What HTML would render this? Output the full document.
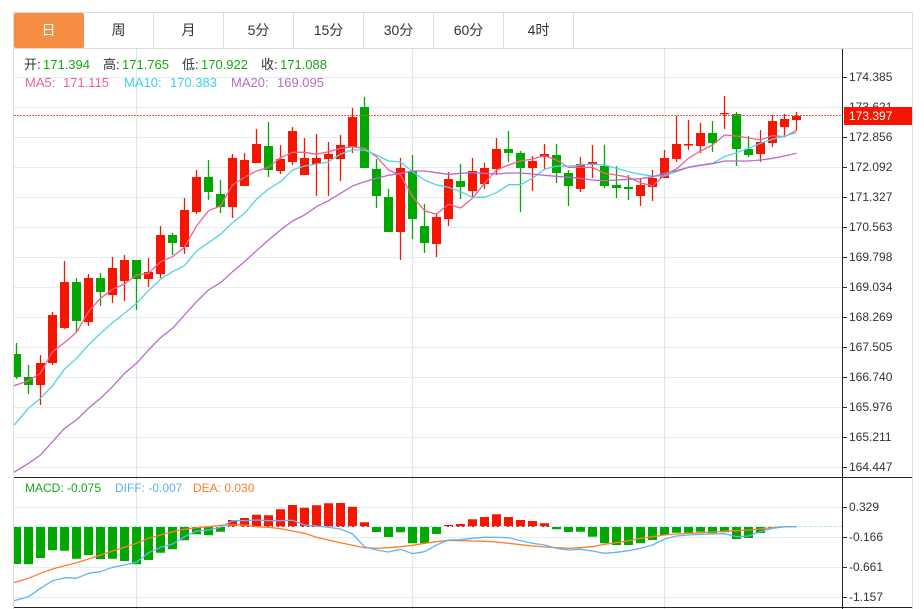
<!DOCTYPE html>
<html><head><meta charset="utf-8">
<style>
html,body{margin:0;padding:0;background:#fff;}
#r{position:relative;width:924px;height:609px;overflow:hidden;background:#fff;font-family:"Liberation Sans","Noto Sans CJK SC",sans-serif;color:#333;}
.a{position:absolute;white-space:pre;}
.tab{position:absolute;top:13px;height:35px;width:69px;line-height:35px;text-align:center;font-size:14px;color:#333;border-right:1px solid #dcdcdc;}
.h{font-size:13px;line-height:16px;height:16px;}
.k{font-size:12px;line-height:14px;height:14px;left:849px;color:#333;}
.m{font-size:12px;line-height:14px;height:14px;}
svg{position:absolute;left:0;top:0;}
</style></head><body>
<div id="r">
<svg width="924" height="609" viewBox="0 0 924 609">
<defs><clipPath id="c"><rect x="14" y="49" width="828" height="560"/></clipPath></defs>
<g stroke="#e4edf3" stroke-width="1" fill="none" shape-rendering="crispEdges">
<path d="M14 77.5H842M14 107.5H842M14 137.5H842M14 167.5H842M14 197.5H842M14 227.5H842M14 257.5H842M14 287.5H842M14 317.5H842M14 347.5H842M14 377.5H842M14 407.5H842M14 437.5H842M14 467.5H842M14 507.5H842M14 537.5H842M14 567.5H842M14 597.5H842"/>
<path stroke="#dde9f1" d="M136.5 49V609M412.5 49V609M664.5 49V609"/>
</g>
<g clip-path="url(#c)">
<path stroke="#f51500" stroke-width="1.3" fill="none" d="M40.5 355V405M52.5 312V365M64.5 261V329M88.5 274V326M112.5 257V303M124.5 255V301M148.5 258V287M160.5 226V278M184.5 198V254M196.5 170V214M232.5 154V218M244.5 153V186M256.5 129V163M280.5 145V174M292.5 127V165M304.5 138V175M316.5 134V196M328.5 142V196M340.5 135V181M352.5 108V153M400.5 158V260M436.5 213V257M448.5 172V226M472.5 158V197M484.5 163V189M496.5 138V175M532.5 156V191M544.5 144V169M580.5 157V192M592.5 145V178M640.5 179V206M652.5 170V201M664.5 150V178M676.5 116V162M688.5 120V150M700.5 123V153M724.5 96V129M760.5 130V162M772.5 115V147M784.5 114V137M796.5 112V131"/>
<path stroke="#00a800" stroke-width="1.3" fill="none" d="M16.5 343V379M28.5 365V394M76.5 278V332M100.5 273V306M136.5 260V310M172.5 233V255M208.5 160V200M220.5 180V213M268.5 122V177M364.5 97V168M376.5 159V208M388.5 189V232M412.5 155V239M424.5 204V253M460.5 164V199M508.5 131V162M520.5 151V212M556.5 144V183M568.5 170V206M604.5 145V188M616.5 166V198M628.5 175V200M712.5 121V152M736.5 112V166M748.5 136V157"/>
<path fill="#f51500" d="M36 363h9v22h-9zM48 315h9v48h-9zM60 282h9v46h-9zM84 278h9v44h-9zM108 268h9v27h-9zM120 260h9v21h-9zM144 272h9v7h-9zM156 235h9v39h-9zM180 210h9v37h-9zM192 177h9v35h-9zM228 158h9v49h-9zM240 160h9v26h-9zM252 144h9v19h-9zM276 159h9v12h-9zM288 131h9v31h-9zM300 158h9v17h-9zM312 158h9v6h-9zM324 154h9v5h-9zM336 145h9v14h-9zM348 117h9v30h-9zM396 168h9v64h-9zM432 217h9v27h-9zM444 179h9v40h-9zM468 171h9v20h-9zM480 168h9v16h-9zM492 149h9v20h-9zM528 161h9v7h-9zM540 154h9v3h-9zM576 164h9v25h-9zM588 162h9v3h-9zM636 185h9v11h-9zM648 178h9v9h-9zM660 158h9v20h-9zM672 144h9v15h-9zM684 144h9v1.500h-9zM696 133h9v13h-9zM720 113h9v1.200h-9zM756 142h9v12h-9zM768 121h9v22h-9zM780 119h9v8h-9zM792 116h9v4h-9z"/>
<path fill="#00a800" d="M12 354h9v23h-9zM24 377h9v8h-9zM72 282h9v39h-9zM96 278h9v14h-9zM132 260h9v19h-9zM168 235h9v8h-9zM204 177h9v15h-9zM216 194h9v13h-9zM264 146h9v24h-9zM360 107h9v61h-9zM372 169h9v27h-9zM384 197h9v35h-9zM408 171h9v48h-9zM420 226h9v17h-9zM456 181h9v6h-9zM504 149h9v4h-9zM516 153h9v15h-9zM552 155h9v18h-9zM564 173h9v13h-9zM600 166h9v20h-9zM612 185h9v3h-9zM624 187h9v2h-9zM708 133h9v10h-9zM732 114h9v35h-9zM744 149h9v6h-9z"/>
<g fill="none" stroke-width="1.300" stroke-linejoin="round">
<polyline stroke="#f4608f" points="14,385.700 28.500,380.700 40.500,373.300 52.500,351.700 64.500,342.700 76.500,332.300 88.500,311.700 100.500,298.300 112.500,289.300 124.500,284 136.500,275 148.500,273.300 160.500,261.700 172.500,256.700 184.500,247.300 196.500,226 208.500,210.700 220.500,206 232.500,185 244.500,177.300 256.500,171 268.500,167.300 280.500,157.700 292.500,152.300 304.500,152.300 316.500,154.300 328.500,151.700 340.500,148.300 352.500,146.700 364.500,148.300 376.500,156.700 388.500,170 400.500,175 412.500,196.700 424.500,210.700 436.500,214.300 448.500,204.300 460.500,208 472.500,198.300 484.500,183.300 496.500,170 508.500,165 520.500,161 532.500,159 544.500,155.700 556.500,160 568.500,167.300 580.500,167.300 592.500,167.300 604.500,173.300 616.500,175 628.500,177.300 640.500,182.700 652.500,186 664.500,175 676.500,169 688.500,158.300 700.500,151 712.500,145 724.500,135 736.500,136 748.500,138 760.500,140 772.500,135.700 784.500,136.700 796.500,130.300"/>
<polyline stroke="#4fd3e6" points="14,425.300 28.500,408.300 40.500,398.300 52.500,385.700 64.500,369 76.500,358.300 88.500,345 100.500,333.300 112.500,322.700 124.500,313.300 136.500,303.300 148.500,290.700 160.500,279.300 172.500,271.700 184.500,265.700 196.500,251 208.500,242.700 220.500,234.300 232.500,222.700 244.500,213.300 256.500,199.300 268.500,189 280.500,181.700 292.500,170 304.500,166 316.500,164 328.500,162 340.500,154 352.500,150 364.500,150 376.500,155 388.500,161 400.500,162 412.500,171.700 424.500,180 436.500,185 448.500,187.300 460.500,191.700 472.500,197.300 484.500,197.300 496.500,192.700 508.500,184.700 520.500,184.700 532.500,178.300 544.500,169.300 556.500,166 568.500,166.300 580.500,165 592.500,164 604.500,165.300 616.500,168.300 628.500,171.700 640.500,174.300 652.500,176 664.500,176 676.500,171.700 688.500,167.300 700.500,165 712.500,163.300 724.500,156.700 736.500,152.700 748.500,148.300 760.500,143.300 772.500,139.300 784.500,136 796.500,132.700"/>
<polyline stroke="#bc68cc" points="14,472.300 28.500,463.300 40.500,455 52.500,441.700 64.500,428.300 76.500,420 88.500,408.300 100.500,398.300 112.500,386.700 124.500,373.300 136.500,363.300 148.500,350 160.500,337.700 172.500,328.300 184.500,315 196.500,301.700 208.500,290 220.500,282.700 232.500,271.700 244.500,261.700 256.500,250.700 268.500,240 280.500,230 292.500,221 304.500,215 316.500,206.700 328.500,200.700 340.500,193.300 352.500,186 364.500,181.700 376.500,178.300 388.500,175.300 400.500,173.300 412.500,171 424.500,171 436.500,172.700 448.500,174.300 460.500,173.300 472.500,172.700 484.500,173.300 496.500,174 508.500,173 520.500,173 532.500,174 544.500,175.300 556.500,176.300 568.500,177.300 580.500,178.300 592.500,180 604.500,180.700 616.500,180 628.500,179.300 640.500,178.700 652.500,176.700 664.500,173.300 676.500,170.700 688.500,167.300 700.500,165.300 712.500,163.700 724.500,161 736.500,161 748.500,161 760.500,160 772.500,158.300 784.500,156 796.500,153.300"/>
</g>
<path d="M14 115.500H842" stroke="#f8503c" stroke-width="1" stroke-dasharray="2 1" fill="none" shape-rendering="crispEdges"/>
<path fill="#00a800" d="M12 527h9v37h-9zM24 527h9v37.300h-9zM36 527h9v31h-9zM48 527h9v23.300h-9zM60 527h9v23.700h-9zM72 527h9v31.700h-9zM84 527h9v28h-9zM96 527h9v32h-9zM108 527h9v31.700h-9zM120 527h9v34h-9zM132 527h9v37.300h-9zM144 527h9v33h-9zM156 527h9v25.700h-9zM168 527h9v22.300h-9zM180 527h9v13.300h-9zM192 527h9v7.300h-9zM204 527h9v8.300h-9zM216 527h9v4.700h-9zM372 527h9v5h-9zM384 527h9v10h-9zM396 527h9v5.300h-9zM408 527h9v16.300h-9zM420 527h9v16.300h-9zM432 527h9v7h-9zM552 527h9v2.300h-9zM564 527h9v5h-9zM576 527h9v4.700h-9zM588 527h9v9.700h-9zM600 527h9v16.300h-9zM612 527h9v18h-9zM624 527h9v18h-9zM636 527h9v16.300h-9zM648 527h9v13h-9zM660 527h9v8h-9zM672 527h9v5.700h-9zM684 527h9v5.700h-9zM696 527h9v4.700h-9zM708 527h9v6.300h-9zM720 527h9v5.300h-9zM732 527h9v12h-9zM744 527h9v11h-9zM756 527h9v6h-9zM768 527h9v.5h-9z"/>
<path fill="#f51500" d="M228 520h9v7h-9zM240 518h9v9h-9zM252 514.700h9v12.300h-9zM264 515.300h9v11.700h-9zM276 509.300h9v17.700h-9zM288 505h9v22h-9zM300 507.700h9v19.300h-9zM312 505.300h9v21.700h-9zM324 503.300h9v23.700h-9zM336 503h9v24h-9zM348 506.700h9v20.300h-9zM360 522.300h9v4.700h-9zM444 525h9v2h-9zM456 524h9v3h-9zM468 519.300h9v7.700h-9zM480 517h9v10h-9zM492 514.300h9v12.700h-9zM504 517h9v10h-9zM516 520h9v7h-9zM528 521h9v6h-9zM540 523.300h9v3.700h-9z"/>
<path d="M14 526.500H842" stroke="#b4e3f1" stroke-width="1" stroke-dasharray="3 2" fill="none"/>
<g fill="none" stroke-width="1.300" stroke-linejoin="round">
<polyline stroke="#ff7d2a" points="14,582.700 28.500,578.300 40.500,573.300 52.500,569 64.500,565.700 76.500,562.700 88.500,559 100.500,555 112.500,551 124.500,547.300 136.500,543.300 148.500,538.300 160.500,535 172.500,531.700 184.500,529.300 196.500,527.700 208.500,526.700 220.500,525.300 232.500,524.700 244.500,525 256.500,526.700 268.500,527.300 280.500,528.700 292.500,531 304.500,533.300 316.500,537.300 328.500,540 340.500,542.700 352.500,545.300 364.500,547.700 376.500,548.300 388.500,547.700 400.500,546.700 412.500,545.300 424.500,543.300 436.500,541.700 448.500,540.300 460.500,540.700 472.500,541 484.500,541.300 496.500,542 508.500,543.300 520.500,544.700 532.500,546 544.500,547 556.500,547.700 568.500,548.300 580.500,547.700 592.500,546.700 604.500,544.300 616.500,542.700 628.500,540.700 640.500,538.300 652.500,536.700 664.500,535 676.500,534 688.500,533.300 700.500,532.700 712.500,532 724.500,531.300 736.500,530.700 748.500,530 760.500,529 772.500,527.700 784.500,526.700 796.500,526.700"/>
<polyline stroke="#62b4f7" points="14,600.700 28.500,596.700 40.500,588.300 52.500,580.700 64.500,577.700 76.500,578.300 88.500,573.300 100.500,571.700 112.500,567.300 124.500,565 136.500,562.300 148.500,552.700 160.500,547.300 172.500,544 184.500,536.700 196.500,531 208.500,530 220.500,527.300 232.500,520.700 244.500,520.700 256.500,520 268.500,520.700 280.500,520.700 292.500,520.300 304.500,525 316.500,526 328.500,527.300 340.500,529 352.500,534 364.500,546.700 376.500,550 388.500,552 400.500,549.300 412.500,553.700 424.500,551.700 436.500,545 448.500,540 460.500,539.700 472.500,538.300 484.500,537.300 496.500,537.300 508.500,537.700 520.500,540.700 532.500,543.300 544.500,545 556.500,548.300 568.500,550 580.500,549.300 592.500,551 604.500,553.300 616.500,552.300 628.500,550.700 640.500,548.300 652.500,545 664.500,539 676.500,536 688.500,535 700.500,534.300 712.500,534 724.500,533.700 736.500,536.700 748.500,536 760.500,531.700 772.500,528.300 784.500,526.700 796.500,526.700"/>
</g>
</g>
<g shape-rendering="crispEdges" fill="none">
<path stroke="#dcdcdc" d="M13.500 12V609M912.500 12V609M13 12.500H913M13 48.500H913"/>
<path stroke="#222" d="M842.500 49V609M14 477.500H912M14 607.500H912"/>
<path stroke="#333" d="M843 77.500h4M843 137.500h4M843 167.500h4M843 197.500h4M843 227.500h4M843 257.500h4M843 287.500h4M843 317.500h4M843 347.500h4M843 377.500h4M843 407.500h4M843 437.500h4M843 467.500h4M843 507.500h4M843 537.500h4M843 567.500h4M843 597.500h4"/>
</g>
</svg>

<div class="tab" style="left:14px;background:#f58e42;color:#fff;border-right:1px solid #f58e42;border-radius:2px;">日</div>
<div class="tab" style="left:84px;">周</div>
<div class="tab" style="left:154px;">月</div>
<div class="tab" style="left:224px;">5分</div>
<div class="tab" style="left:294px;">15分</div>
<div class="tab" style="left:364px;">30分</div>
<div class="tab" style="left:434px;">60分</div>
<div class="tab" style="left:504px;">4时</div>

<div class="a h" style="left:24px;top:57px;">开:</div><div class="a h" style="left:43px;top:57px;color:#13a813;">171.394</div>
<div class="a h" style="left:103px;top:57px;">高:</div><div class="a h" style="left:122px;top:57px;color:#13a813;">171.765</div>
<div class="a h" style="left:182px;top:57px;">低:</div><div class="a h" style="left:201px;top:57px;color:#13a813;">170.922</div>
<div class="a h" style="left:261px;top:57px;">收:</div><div class="a h" style="left:280px;top:57px;color:#13a813;">171.088</div>
<div class="a h" style="left:25px;top:75px;color:#f4608f;">MA5:</div><div class="a h" style="left:63px;top:75px;color:#f4608f;">171.115</div>
<div class="a h" style="left:124px;top:75px;color:#3fcfe4;">MA10:</div><div class="a h" style="left:170px;top:75px;color:#3fcfe4;">170.383</div>
<div class="a h" style="left:231px;top:75px;color:#bc68cc;">MA20:</div><div class="a h" style="left:277px;top:75px;color:#bc68cc;">169.095</div>

<div class="a k" style="top:70px;">174.385</div>
<div class="a k" style="top:100px;">173.621</div>
<div class="a k" style="top:130px;">172.856</div>
<div class="a k" style="top:160px;">172.092</div>
<div class="a k" style="top:190px;">171.327</div>
<div class="a k" style="top:220px;">170.563</div>
<div class="a k" style="top:250px;">169.798</div>
<div class="a k" style="top:280px;">169.034</div>
<div class="a k" style="top:310px;">168.269</div>
<div class="a k" style="top:340px;">167.505</div>
<div class="a k" style="top:370px;">166.740</div>
<div class="a k" style="top:400px;">165.976</div>
<div class="a k" style="top:430px;">165.211</div>
<div class="a k" style="top:460px;">164.447</div>
<div class="a k" style="top:500px;">0.329</div>
<div class="a k" style="top:530px;left:849px;">-0.166</div>
<div class="a k" style="top:560px;">-0.661</div>
<div class="a k" style="top:590px;">-1.157</div>

<div class="a" style="left:844px;top:107px;width:68px;height:18px;background:#f51500;"></div>
<div class="a k" style="top:109px;color:#fff;">173.397</div>

<div class="a m" style="left:25px;top:481px;color:#13a813;">MACD: -0.075</div>
<div class="a m" style="left:115px;top:481px;color:#5cb0f6;">DIFF: -0.007</div>
<div class="a m" style="left:193px;top:481px;color:#ff7d2a;">DEA: 0.030</div>
</div>
</body></html>
